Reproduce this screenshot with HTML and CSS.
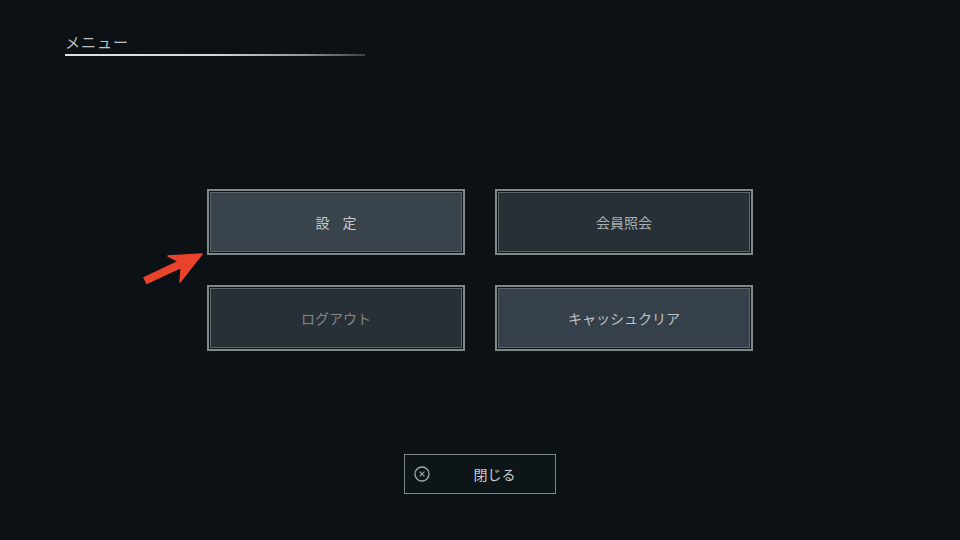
FILE: index.html
```html
<!DOCTYPE html>
<html lang="ja">
<head>
  <meta charset="UTF-8">
  <meta name="viewport" content="width=device-width, initial-scale=1.0">
  <title>メニュー</title>
  <link rel="stylesheet" href="styles.css">
</head>
<body>
  <header class="menu-head">
    <div class="menu-title">メニュー</div>
    <div class="menu-rule"></div>
  </header>

  <main class="menu-grid">
    <button class="tile tile-active wide">設定</button>
    <button class="tile">会員照会</button>
    <button class="tile tile-dim">ログアウト</button>
    <button class="tile tile-light">キャッシュクリア</button>
  </main>

  <footer class="menu-foot">
    <button class="close-btn">
      <svg class="close-icon" viewBox="0 0 16 16" width="16" height="16">
        <circle cx="8" cy="8" r="7" fill="none" stroke="#a3a7a9" stroke-width="1.3"/>
        <path d="M5.6 5.6 L10.4 10.4 M10.4 5.6 L5.6 10.4" stroke="#a3a7a9" stroke-width="1.1"/>
      </svg>
      <span class="close-label">閉じる</span>
    </button>
  </footer>

  <svg class="pointer" viewBox="0 0 960 540" width="960" height="540">
    <polygon points="202,254 168,256 178.5,261.4 144.1,277.6 146.9,283.4 181.3,267.2 180,282"
             fill="#e9442b" stroke="#e9442b" stroke-width="1.5" stroke-linejoin="round"/>
  </svg>
</body>
</html>
```

FILE: styles.css
```css
body {
  margin: 0;
  width: 960px;
  height: 540px;
  background: #0b1114;
  color: #c9cccd;
  font-family: "Noto Sans CJK JP", "Noto Sans", sans-serif;
  display: flex;
  flex-direction: column;
  position: relative;
  overflow: hidden;
}
.menu-head {
  padding: 32px 0 0 65px;
  height: 157px;
  box-sizing: border-box;
}
.menu-title {
  font-size: 15px;
  line-height: 20px;
  color: #bfc2c3;
  letter-spacing: 1px;
}
.menu-rule {
  margin-top: 2px;
  width: 300px;
  height: 2px;
  background: linear-gradient(to right, #e0e2e3 0%, #d4d6d7 50%, rgba(190,194,196,0.75) 80%, rgba(160,164,166,0.35) 100%);
}
.menu-grid {
  display: grid;
  grid-template-columns: 258px 258px;
  grid-auto-rows: 66px;
  gap: 30px;
  justify-content: center;
  margin-top: 32px;
}
.tile {
  font-family: inherit;
  font-size: 14px;
  color: #aab0b3;
  background: #283037;
  border: 2px solid #80878b;
  box-shadow: inset 0 0 0 1px #10171a, inset 0 0 0 2px #5c656a;
  padding: 0;
  cursor: pointer;
}
.tile-active {
  background: #39434b;
  color: #c8ccce;
}
.tile-light {
  background: #36404a;
  color: #bec2c5;
}
.tile-dim {
  color: #7f868a;
}
.wide {
  letter-spacing: 13px;
  text-indent: 13px;
}
.menu-foot {
  display: flex;
  justify-content: center;
  margin-top: 103px;
}
.close-btn {
  width: 152px;
  height: 40px;
  display: flex;
  align-items: center;
  padding: 0 0 0 9px;
  background: #0d1518;
  border: 1px solid #808588;
  font-family: inherit;
  font-size: 14px;
  color: #c8cacb;
}
.close-icon {
  display: block;
}
.close-label {
  flex: 1;
  text-align: center;
  padding-left: 4px;
}
.pointer {
  position: absolute;
  left: 0;
  top: 0;
  pointer-events: none;
}
```
